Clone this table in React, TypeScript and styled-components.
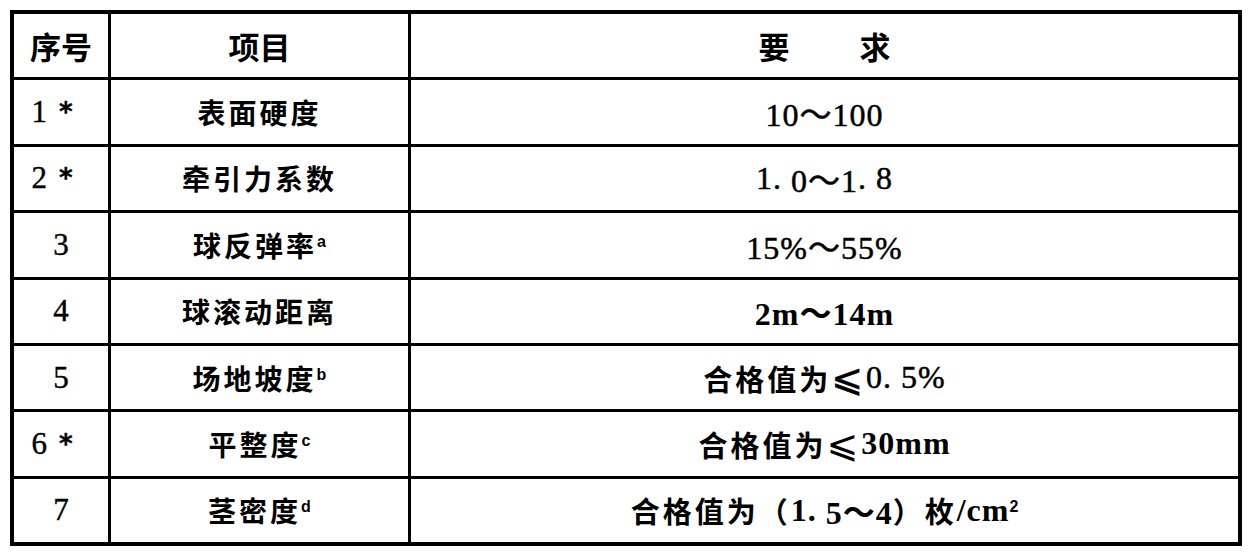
import React from "react";
import styled, { createGlobalStyle } from "styled-components";

const Global = createGlobalStyle`
  html, body { margin: 0; padding: 0; background: #fff; }
  body { width: 1251px; height: 556px; overflow: hidden; }
`;

const Page = styled.div`
  padding: 10px 0 0 10px;
`;

const Grid = styled.div`
  display: grid;
  grid-template-columns: 94px 297px 827px;
  grid-auto-rows: 1fr;
  gap: 3px;
  padding: 4px;
  width: 1232px;
  height: 536px;
  box-sizing: border-box;
  background: #000;
`;

const CellBase = styled.div`
  background: #fff;
  display: flex;
  align-items: center;
  justify-content: center;
  color: #000;
  white-space: nowrap;
`;

const HeadCell = styled(CellBase)`
  font-family: "Noto Sans CJK SC", sans-serif;
  font-weight: 700;
  font-size: 31px;
`;

const NumCell = styled(CellBase)<{ $star?: boolean }>`
  font-family: "Liberation Serif", serif;
  font-weight: 400;
  font-size: 31px;
  -webkit-text-stroke: 0.4px #000;
  padding-right: ${(p) => (p.$star ? "18px" : "0")};
`;

const ItemCell = styled(CellBase)`
  font-family: "Noto Sans CJK SC", sans-serif;
  font-weight: 700;
  font-size: 28px;
  letter-spacing: 3px;
`;

const ReqCell = styled(CellBase)<{ $bold?: boolean }>`
  font-family: "Liberation Serif", "Noto Sans CJK SC", serif;
  font-weight: ${(p) => (p.$bold ? 700 : 400)};
  font-size: 32px;
  letter-spacing: 1px;
  -webkit-text-stroke: ${(p) => (p.$bold ? "0" : "0.5px #000")};
`;

const Star = styled.span`
  font-family: "DejaVu Sans", sans-serif;
  font-weight: 700;
  font-size: 26px;
  margin-left: 12px;
`;

const Sup = styled.sup`
  font-family: "Liberation Sans", sans-serif;
  font-weight: 700;
  font-size: 16px;
  letter-spacing: 0;
  position: relative;
  top: -3px;
`;

const Han = styled.span`
  font-family: "Noto Sans CJK SC", sans-serif;
  font-weight: 700;
  font-size: 29px;
  letter-spacing: 3px;
  -webkit-text-stroke: 0;
`;

const Dot = styled.span`
  margin-right: 9px;
`;

const Le = styled.span`
  font-family: "DejaVu Sans", "Liberation Serif", sans-serif;
  font-weight: 400;
  font-size: 38px;
  line-height: 1;
  margin: 0 2px 0 0;
`;

const Spread = styled.span`
  margin: 0 35px;
`;

type Row = {
  n: string;
  star?: boolean;
  item: string;
  sup?: string;
  bold?: boolean;
  req: React.ReactNode;
};

const rows: Row[] = [
  { n: "1", star: true, item: "表面硬度", req: "10～100" },
  {
    n: "2",
    star: true,
    item: "牵引力系数",
    req: (
      <>
        1<Dot>.</Dot>0～1<Dot>.</Dot>8
      </>
    ),
  },
  { n: "3", item: "球反弹率", sup: "a", req: "15%～55%" },
  { n: "4", item: "球滚动距离", bold: true, req: "2m～14m" },
  {
    n: "5",
    item: "场地坡度",
    sup: "b",
    req: (
      <>
        <Han>合格值为</Han>
        <Le>⩽</Le>0<Dot>.</Dot>5%
      </>
    ),
  },
  {
    n: "6",
    star: true,
    item: "平整度",
    sup: "c",
    bold: true,
    req: (
      <>
        <Han>合格值为</Han>
        <Le>⩽</Le>30mm
      </>
    ),
  },
  {
    n: "7",
    item: "茎密度",
    sup: "d",
    bold: true,
    req: (
      <>
        <Han>合格值为（</Han>1<Dot>.</Dot>5～4<Han>）枚</Han>/cm<Sup>2</Sup>
      </>
    ),
  },
];

export default function App() {
  return (
    <>
      <Global />
      <Page>
        <Grid>
          <HeadCell>序号</HeadCell>
          <HeadCell>项目</HeadCell>
          <HeadCell>
            <Spread>要</Spread>
            <Spread>求</Spread>
          </HeadCell>
          {rows.map((r) => (
            <React.Fragment key={r.n}>
              <NumCell $star={r.star}>
                {r.n}
                {r.star && <Star>*</Star>}
              </NumCell>
              <ItemCell>
                {r.item}
                {r.sup && <Sup>{r.sup}</Sup>}
              </ItemCell>
              <ReqCell $bold={r.bold}>{r.req}</ReqCell>
            </React.Fragment>
          ))}
        </Grid>
      </Page>
    </>
  );
}
